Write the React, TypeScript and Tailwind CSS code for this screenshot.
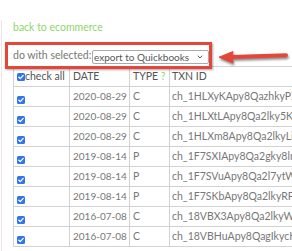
import { ChevronDown } from "lucide-react";

const rows = [
  { date: "2020-08-29", type: "C", txn: "ch_1HLXyKApy8QazhkyPZ4qW2" },
  { date: "2020-08-29", type: "C", txn: "ch_1HLXtLApy8Qa2lky5KBn7r" },
  { date: "2020-08-29", type: "C", txn: "ch_1HLXm8Apy8Qa2lkyLix0pT" },
  { date: "2019-08-14", type: "P", txn: "ch_1F7SXIApy8Qa2gky8lnaQe" },
  { date: "2019-08-14", type: "P", txn: "ch_1F7SVuApy8Qa2l7ytWVc3k" },
  { date: "2019-08-14", type: "P", txn: "ch_1F7SKbApy8Qa2lkyRPI7dm" },
  { date: "2016-07-08", type: "C", txn: "ch_18VBX3Apy8Qa2lkyWTu1Hs" },
  { date: "2016-07-08", type: "C", txn: "ch_18VBHuApy8QagIkycKIz9b" },
];

const Tick = ({ className = "" }: { className?: string }) => (
  <span
    className={`flex items-center justify-center w-[8px] h-[8px] rounded-[1.5px] bg-[#2f74f0] shrink-0 ${className}`}
  >
    <svg viewBox="0 0 8 8" className="w-[8px] h-[8px]">
      <path
        d="M1.8 4.2 L3.3 5.6 L6.2 2.4"
        fill="none"
        stroke="white"
        strokeWidth="1.3"
        strokeLinecap="round"
        strokeLinejoin="round"
      />
    </svg>
  </span>
);

const App = () => {
  return (
    <section className="relative w-[292px] h-[251px] overflow-hidden bg-white font-['Lato',sans-serif] text-[10.5px]">
      <section className="h-full ml-[1px] pl-[11px] border-l border-[#f1e4e4]">
        <a className="block mt-[20px] leading-[14px] text-[#8fd56c]">
          back to ecommerce
        </a>

        <section className="relative z-10 flex items-start w-[207px] h-[27px] mt-[8px] -ml-[8px] bg-white border-[3px] border-[#e6453a] shadow-[1px_1px_2px_rgba(0,0,0,0.35)]">
          <label className="w-[84px] pl-[5px] leading-[21px] text-[#777] whitespace-nowrap">
            do with selected:
          </label>
          <div className="relative mt-[5px]">
            <select className="appearance-none w-[117px] h-[14px] pl-[1px] border border-[#aaa] rounded-[2px] bg-white text-[10px] leading-[12px] text-[#555] outline-none">
              <option>export to Quickbooks</option>
            </select>
            <ChevronDown
              size={8}
              strokeWidth={3}
              className="absolute right-[5px] top-[3px] text-[#555] pointer-events-none"
            />
          </div>
        </section>

        <section className="-mt-[3px] w-[400px] border-l border-[#d2d2d2] text-[#777]">
          <div className="grid grid-cols-[56px_60px_40px_240px] h-[21px] border-y border-[#d2d2d2] text-[#555]">
            <div className="flex items-start pl-[3px] border-r border-[#d2d2d2]">
              <Tick className="mt-[6px]" />
              <span className="leading-[19px] whitespace-nowrap">check all</span>
            </div>
            <div className="pl-[3px] leading-[19px] border-r border-[#d2d2d2]">DATE</div>
            <div className="pl-[3px] leading-[19px] border-r border-[#d2d2d2] whitespace-nowrap">
              TYPE <span className="text-[#8fd56c]">?</span>
            </div>
            <div className="pl-[2px] leading-[19px]">TXN ID</div>
          </div>

          {rows.map((row, i) => (
            <div
              key={i}
              className="grid grid-cols-[56px_60px_40px_240px] h-[20px] border-b border-[#d2d2d2]"
            >
              <div className="pl-[3px] border-r border-[#d2d2d2]">
                <Tick className="mt-[9px]" />
              </div>
              <div className="pl-[3px] text-[10px] leading-[19px] whitespace-nowrap border-r border-[#d2d2d2]">
                {row.date}
              </div>
              <div className="pl-[3px] leading-[19px] border-r border-[#d2d2d2]">{row.type}</div>
              <div className="pl-[2px] leading-[19px] whitespace-nowrap">{row.txn}</div>
            </div>
          ))}
        </section>
      </section>

      <svg
        viewBox="0 0 75 18"
        className="absolute left-[217px] top-[48px] w-[75px] h-[18px] drop-shadow-[1px_2px_1px_rgba(0,0,0,0.45)]"
      >
        <path d="M14 9 L69 7.2" stroke="#e6453a" strokeWidth="4" strokeLinecap="round" />
        <path d="M2 9.2 L16 3.5 L15 9 L16 15 Z" fill="#e6453a" stroke="#e6453a" strokeWidth="1" strokeLinejoin="round" />
      </svg>
    </section>
  );
};

export default App;
